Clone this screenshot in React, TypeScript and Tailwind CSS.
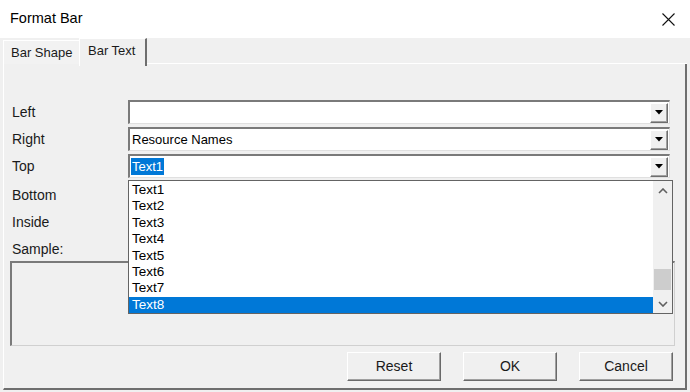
import React from "react";

const items = ["Text1", "Text2", "Text3", "Text4", "Text5", "Text6", "Text7", "Text8"];

function ArrowButton() {
  return (
    <div className="flex items-center justify-center w-[18px] h-[20px] bg-[#f0f0f0] border border-t-white border-l-white border-b-[#6e6e6e] border-r-[#6e6e6e] shadow-[inset_-1px_-1px_0_#a0a0a0]">
      <svg width="8" height="5" viewBox="0 0 8 5">
        <path d="M0 0 L8 0 L4 4.5 Z" fill="#000" />
      </svg>
    </div>
  );
}

function Combo({ value, selected }: { value?: string; selected?: boolean }) {
  return (
    <div className="flex items-center w-[542px] h-[24px] bg-white border-t-2 border-l-2 border-b border-r border-t-[#7a7a7a] border-l-[#7a7a7a] border-b-[#e0e0e0] border-r-[#e0e0e0]">
      <div className="flex-1 pl-[1px] text-[13px] leading-[18px]">
        {value && (
          <span
            className={
              selected
                ? "bg-[#0078d7] text-white px-[1px] py-[1px]"
                : "text-black px-[1px]"
            }
          >
            {value}
          </span>
        )}
      </div>
      <ArrowButton />
      <div className="w-[1px]" />
    </div>
  );
}

function DropList() {
  return (
    <div className="absolute left-0 top-[26px] z-10 flex w-[545px] h-[134px] bg-white border border-[#646464]">
      <div className="flex-1 flex flex-col pt-[1px]">
        {items.map((t) => (
          <div
            key={t}
            className={`h-[16.4px] leading-[16.4px] pl-[3px] text-[13.5px] ${
              t === "Text8" ? "bg-[#0078d7] text-white" : "text-black"
            }`}
          >
            {t}
          </div>
        ))}
      </div>
      <div className="flex flex-col w-[19px] bg-[#f0f0f0]">
        <div className="flex h-[19px] items-center justify-center">
          <svg width="10" height="6" viewBox="0 0 10 6">
            <path d="M1 5 L5 1 L9 5" fill="none" stroke="#606060" strokeWidth="1.6" />
          </svg>
        </div>
        <div className="flex-1 flex flex-col justify-end pb-[4px] px-[1px]">
          <div className="h-[21px] bg-[#cdcdcd]" />
        </div>
        <div className="flex h-[19px] items-center justify-center">
          <svg width="10" height="6" viewBox="0 0 10 6">
            <path d="M1 1 L5 5 L9 1" fill="none" stroke="#606060" strokeWidth="1.6" />
          </svg>
        </div>
      </div>
    </div>
  );
}

function Row({ label, children }: { label: string; children?: React.ReactNode }) {
  return (
    <div className="flex items-center h-[24px]">
      <div className="w-[124px] pl-[8px] text-[14px] text-[#1a1a1a]">{label}</div>
      {children}
    </div>
  );
}

function Btn({ label }: { label: string }) {
  return (
    <div className="flex items-center justify-center w-[94px] h-[29px] bg-[#f0f0f0] text-[14px] text-[#1a1a1a] border border-t-white border-l-white border-b-[#696969] border-r-[#696969] shadow-[inset_-1px_-1px_0_#a0a0a0]">
      {label}
    </div>
  );
}

export default function App() {
  return (
    <div
      className="w-[690px] h-[392px] bg-white flex flex-col overflow-hidden"
      style={{ fontFamily: '"Liberation Sans", Arial, sans-serif' }}
    >
      <div className="flex items-center justify-between h-[38px] pl-[10px] pr-[15px]">
        <span className="text-[14.5px] text-black">Format Bar</span>
        <svg width="13" height="13" viewBox="0 0 13 13">
          <path d="M0.5 0.5 L12.5 12.5 M12.5 0.5 L0.5 12.5" stroke="#111" strokeWidth="1.1" />
        </svg>
      </div>
      <div className="flex-1 flex flex-col bg-[#f0f0f0] pl-[3px] pr-[3px] pb-[2px]">
        <div className="flex items-end h-[26px]">
          <div className="flex items-center pt-[1px] h-[24px] w-[76px] pl-[7px] text-[13px] text-[#1a1a1a] border-t border-l border-white bg-[#f2f2f2]">
            Bar Shape
          </div>
          <div className="flex items-start pt-[2px] h-[28px] w-[68px] -mb-[2px] pl-[8px] text-[13px] text-[#1a1a1a] border-t border-l border-white border-r-2 border-r-[#6e6e6e] bg-[#f0f0f0] relative z-10">
            Bar Text
          </div>
          <div className="flex-1 border-b border-white" />
        </div>
        <div className="flex-1 flex flex-col border-l border-l-white border-r-2 border-r-[#6e6e6e] border-b-2 border-b-[#6e6e6e] pt-[36px]">
          <div className="flex flex-col gap-[3px]">
            <Row label="Left">
              <Combo />
            </Row>
            <Row label="Right">
              <Combo value="Resource Names" />
            </Row>
            <Row label="Top">
              <div className="relative">
                <Combo value="Text1" selected />
                <DropList />
              </div>
            </Row>
            <div className="mt-[2px] flex flex-col gap-[3px]">
              <Row label="Bottom" />
              <Row label="Inside" />
              <Row label="Sample:" />
            </div>
          </div>
          <div className="ml-[6px] w-[665px] h-[85px] border-t-2 border-l-2 border-t-[#7a7a7a] border-l-[#7a7a7a] border-b border-r border-b-[#d0d0d0] border-r-[#d0d0d0]" />
          <div className="flex justify-end gap-[22px] mt-[6px] pr-[12px]">
            <Btn label="Reset" />
            <Btn label="OK" />
            <Btn label="Cancel" />
          </div>
        </div>
      </div>
    </div>
  );
}
